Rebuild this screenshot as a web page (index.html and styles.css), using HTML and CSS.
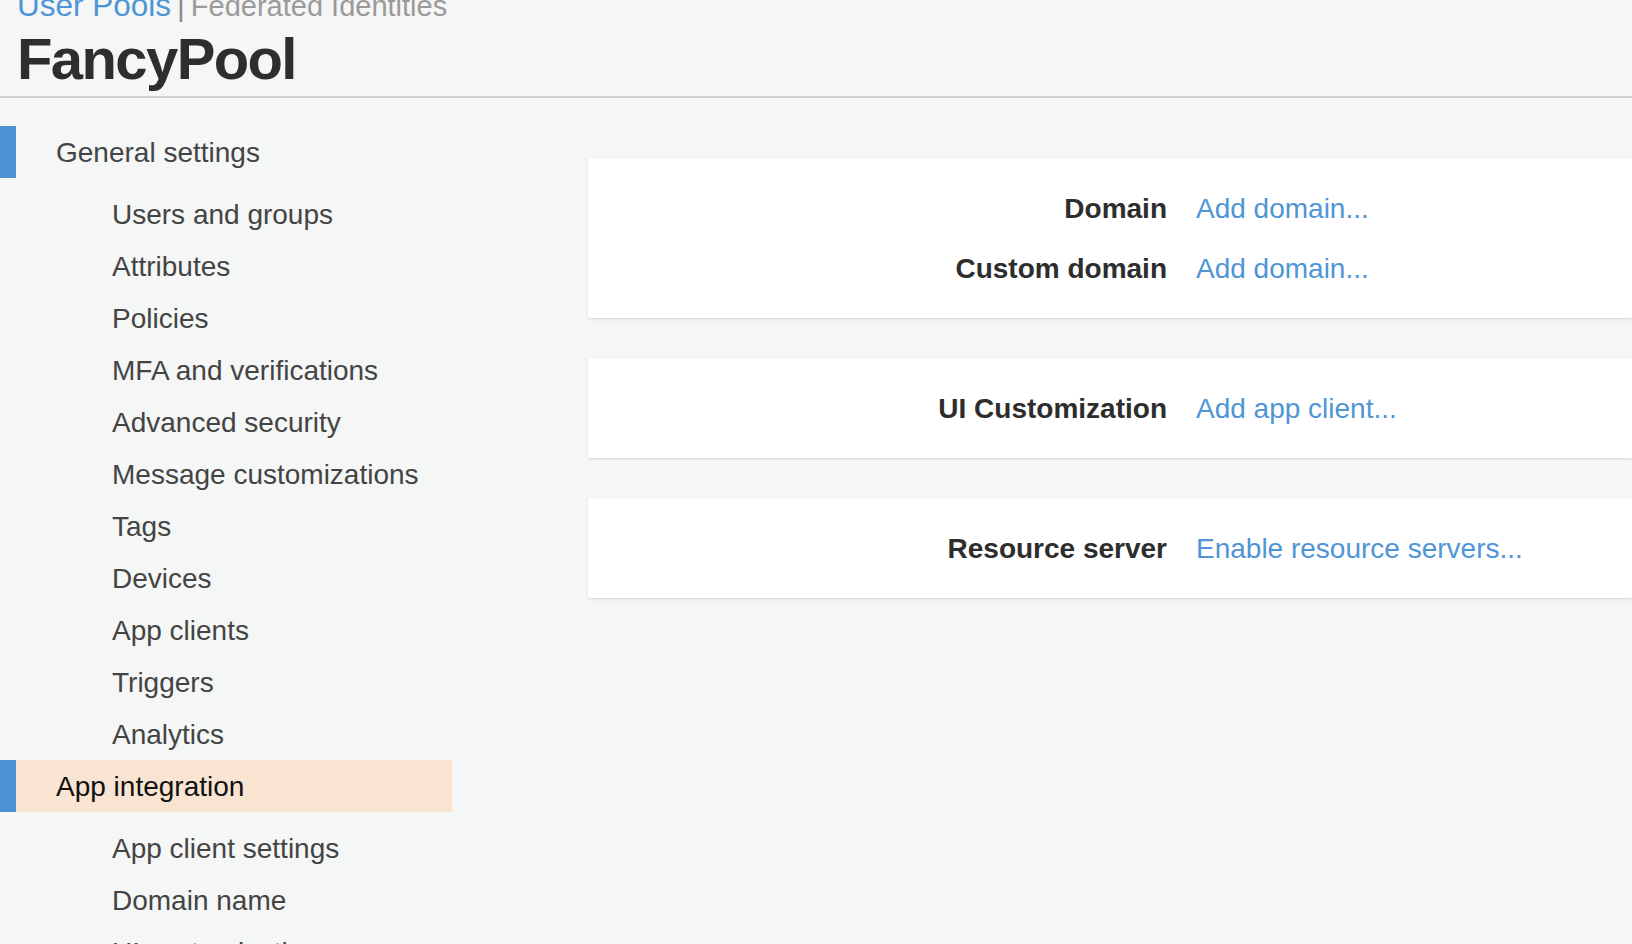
FILE: index.html
```html
<!DOCTYPE html>
<html lang="en">
<head>
<meta charset="utf-8">
<title>FancyPool</title>
<link rel="stylesheet" href="styles.css">
</head>
<body>
<header class="page-header">
  <nav class="crumbs">
    <a class="crumb crumb-active" href="#">User Pools</a><span class="crumb-sep">|</span><a class="crumb crumb-muted" href="#">Federated Identities</a>
  </nav>
  <h1 class="pool-title">FancyPool</h1>
</header>
<div class="layout">
  <aside class="sidebar">
    <div class="nav-group">
      <div class="nav-head">General settings</div>
      <ul class="nav-list">
        <li>Users and groups</li>
        <li>Attributes</li>
        <li>Policies</li>
        <li>MFA and verifications</li>
        <li>Advanced security</li>
        <li>Message customizations</li>
        <li>Tags</li>
        <li>Devices</li>
        <li>App clients</li>
        <li>Triggers</li>
        <li>Analytics</li>
      </ul>
    </div>
    <div class="nav-group">
      <div class="nav-head nav-head-active">App integration</div>
      <ul class="nav-list">
        <li>App client settings</li>
        <li>Domain name</li>
        <li>UI customization</li>
        <li>Resource servers</li>
      </ul>
    </div>
  </aside>
  <main class="content">
    <section class="card">
      <div class="row"><span class="label">Domain</span><a class="link" href="#">Add domain...</a></div>
      <div class="row"><span class="label">Custom domain</span><a class="link" href="#">Add domain...</a></div>
    </section>
    <section class="card">
      <div class="row"><span class="label">UI Customization</span><a class="link" href="#">Add app client...</a></div>
    </section>
    <section class="card">
      <div class="row"><span class="label">Resource server</span><a class="link" href="#">Enable resource servers...</a></div>
    </section>
  </main>
</div>
</body>
</html>
```
FILE: styles.css
```css
html, body {
  margin: 0;
  padding: 0;
}
body {
  background: #f5f6f6;
  font-family: "Liberation Sans", Arial, Helvetica, sans-serif;
  color: #444;
  height: 944px;
  overflow: hidden;
}
a {
  text-decoration: none;
}

.page-header {
  padding-left: 17px;
  padding-bottom: 8px;
  border-bottom: 2px solid #d0d0d0;
}
.crumbs {
  margin-top: -11px;
  height: 32px;
  line-height: 32px;
  display: flex;
  align-items: baseline;
}
.crumb-active {
  color: #4f95d6;
  font-size: 31.5px;
}
.crumb-sep {
  color: #8a8a8a;
  font-size: 30px;
  margin: 0 6px 0 6px;
}
.crumb-muted {
  color: #9a9a9a;
  font-size: 29px;
}
.pool-title {
  margin: 9px 0 0 0;
  font-size: 58px;
  line-height: 58px;
  letter-spacing: -1.6px;
  font-weight: bold;
  color: #2e2e2e;
}

.layout {
  display: flex;
  align-items: flex-start;
}
.sidebar {
  width: 452px;
  flex: none;
  padding-top: 28px;
}
.nav-head {
  height: 52px;
  line-height: 54px;
  border-left: 16px solid #4d91d3;
  padding-left: 40px;
  font-size: 28px;
  color: #444;
}
.nav-head-active {
  background: #f8e4d0;
  color: #111;
}
.nav-list {
  list-style: none;
  margin: 10px 0 0 0;
  padding: 0 0 0 112px;
}
.nav-list li {
  height: 52px;
  line-height: 54px;
  font-size: 28px;
  color: #444;
  white-space: nowrap;
}

.content {
  flex: 1;
  padding-top: 60px;
  padding-left: 136px;
  display: flex;
  flex-direction: column;
  gap: 40px;
}
.card {
  background: #fff;
  padding: 20px 0;
  box-shadow: 0 1px 3px rgba(0, 0, 0, 0.14);
  border-radius: 1px;
}
.row {
  display: grid;
  grid-template-columns: 579px auto;
  column-gap: 29px;
  height: 60px;
  line-height: 61px;
  font-size: 28px;
}
.label {
  text-align: right;
  font-weight: bold;
  color: #2d2d2d;
}
.link {
  color: #4f95d6;
}
```
